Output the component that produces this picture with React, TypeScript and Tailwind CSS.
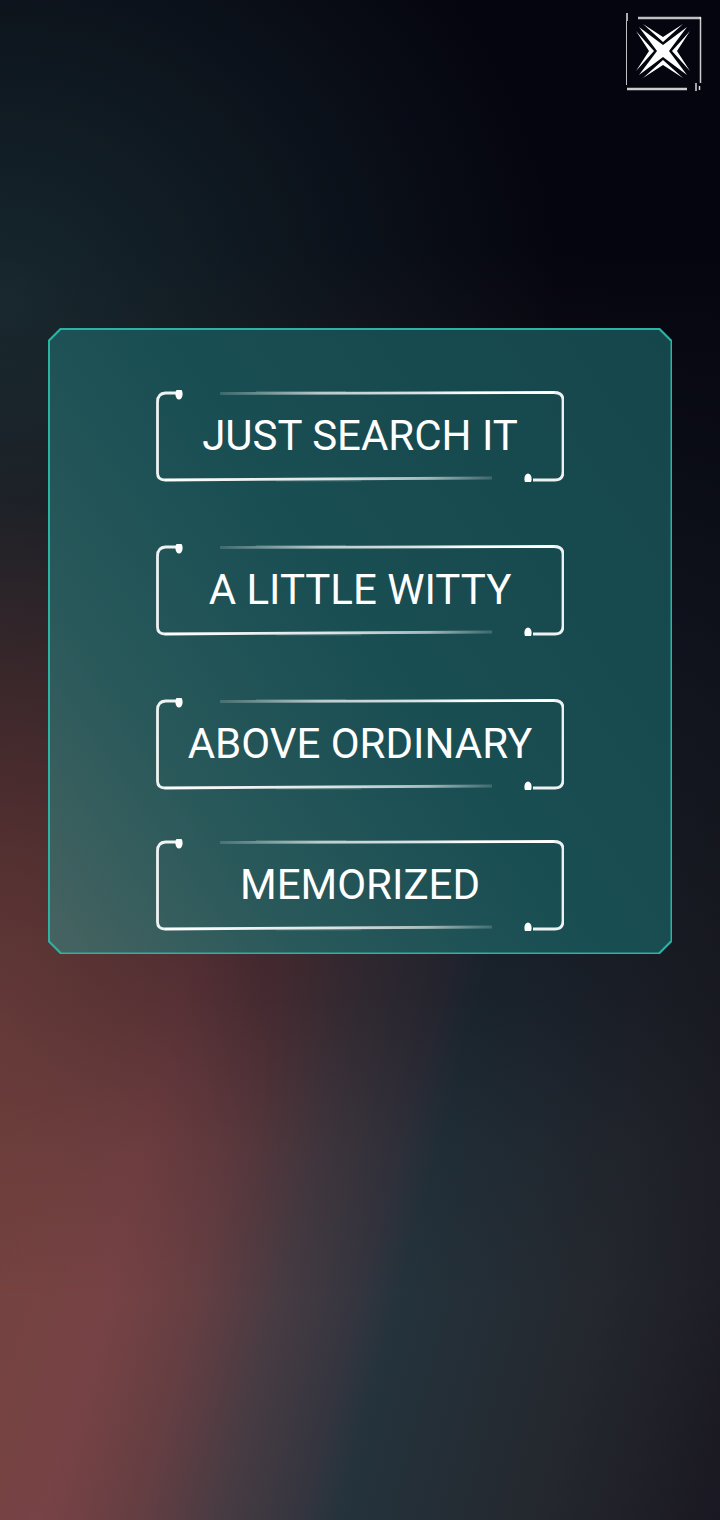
const font = { fontFamily: "Roboto, sans-serif" };

const OPTIONS = [
  { label: "JUST SEARCH IT", spacing: "mt-0" },
  { label: "A LITTLE WITTY", spacing: "mt-[62px]" },
  { label: "ABOVE ORDINARY", spacing: "mt-[62px]" },
  { label: "MEMORIZED", spacing: "mt-[49px]" },
];

// hand-inked outline with two broken corners
function ButtonFrame() {
  return (
    <svg viewBox="0 0 408 92" className="absolute inset-0 h-full w-full" fill="none">
      <defs>
        <linearGradient id="inkTop" x1="64" x2="400" y1="0" y2="0" gradientUnits="userSpaceOnUse">
          <stop offset="0" stopColor="#fff" stopOpacity="0.15" />
          <stop offset="0.3" stopColor="#fff" stopOpacity="0.7" />
          <stop offset="0.6" stopColor="#fff" stopOpacity="0.85" />
          <stop offset="0.75" stopColor="#fff" stopOpacity="1" />
        </linearGradient>
        <linearGradient id="inkBottom" x1="8" x2="338" y1="0" y2="0" gradientUnits="userSpaceOnUse">
          <stop offset="0" stopColor="#fff" stopOpacity="1" />
          <stop offset="0.5" stopColor="#fff" stopOpacity="0.85" />
          <stop offset="0.8" stopColor="#fff" stopOpacity="0.6" />
          <stop offset="1" stopColor="#fff" stopOpacity="0.15" />
        </linearGradient>
      </defs>
      <path d="M20 3H9.5Q1.5 3.5 1.5 12V83Q1.5 90 9 90" stroke="#fff" strokeOpacity="0.92" strokeWidth="2.8" />
      <path d="M64 3.5C170 3.5 300 2.5 398 2.5" stroke="url(#inkTop)" strokeWidth="2.8" />
      <path d="M100 1.5H190" stroke="#fff" strokeOpacity="0.14" strokeWidth="1" />
      <path d="M398 2.5Q407 2.5 407 10V82Q407 90 399 90H377" stroke="#fff" strokeOpacity="0.92" strokeWidth="2.8" />
      <path d="M9 90C130 89.5 240 88 336 88" stroke="url(#inkBottom)" strokeWidth="2.8" />
      <path d="M120 91H205" stroke="#fff" strokeOpacity="0.15" strokeWidth="1" />
      <ellipse cx="23" cy="4" rx="3.6" ry="5.5" fill="#fff" />
      <ellipse cx="372" cy="89" rx="3.6" ry="5.5" fill="#fff" />
    </svg>
  );
}

function LogoMark() {
  return (
    <svg viewBox="0 0 78 78" className="h-[78px] w-[78px]" fill="none">
      <path d="M2 0V8" stroke="#fff" strokeOpacity="0.9" strokeWidth="1.5" />
      <path d="M1.5 8V72" stroke="#fff" strokeOpacity="0.75" strokeWidth="1" />
      <path d="M13 5H76" stroke="#fff" strokeOpacity="0.75" strokeWidth="2.5" />
      <path d="M75.5 4V70" stroke="#fff" strokeOpacity="0.8" strokeWidth="1.5" />
      <path d="M2 76H62" stroke="#fff" strokeOpacity="0.8" strokeWidth="2.5" />
      <path d="M71 70V78M74.5 73V77" stroke="#fff" strokeOpacity="0.85" strokeWidth="1.5" />
      <g fill="#fff">
        {/* centre cross with four sharp arms */}
        <path d="M14 14L38 32L62 14L44 38L62 62L38 44L14 62L32 38Z" />
        {/* chevrons nested between the arms */}
        <path d="M18 11L38 24L58 11L38 29Z" />
        <path d="M18 65L38 52L58 65L38 47Z" />
        <path d="M11 18L24 38L11 58L29 38Z" />
        <path d="M65 18L52 38L65 58L47 38Z" />
      </g>
    </svg>
  );
}

export default function App() {
  return (
    <div
      style={font}
      className="relative h-[1520px] w-[720px] overflow-hidden bg-[radial-gradient(ellipse_260px_520px_at_0px_1020px,rgba(116,66,63,0.55)_0%,rgba(116,66,63,0)_100%),radial-gradient(ellipse_560px_520px_at_0px_300px,rgba(32,58,62,0.65)_0%,rgba(32,58,62,0)_100%),linear-gradient(to_bottom,rgba(5,5,15,1)_250px,rgba(5,5,15,0.8)_500px,rgba(5,5,15,0.6)_700px,rgba(5,5,15,0.35)_1000px,rgba(5,5,15,0.12)_1150px,rgba(5,5,15,0)_1300px),linear-gradient(105deg,#74423f_300px,#784246_433px,#633e42_530px,#463b42_610px,#35353f_680px,#24333c_722px,#24272e_920px,#1a1822_1089px)]"
    >
      <div className="flex justify-end pr-[17px] pt-[13px]">
        <LogoMark />
      </div>

      {/* question card, border is the outer clipped layer */}
      <div className="mx-[48px] mt-[237px] h-[626px] bg-[#2bb3a3] p-[1.5px] [clip-path:polygon(12px_0,calc(100%-12px)_0,100%_12px,100%_calc(100%-12px),calc(100%-12px)_100%,12px_100%,0_calc(100%-12px),0_12px)]">
        <div className="h-full w-full bg-[linear-gradient(55deg,#476361_0%,#28585a_25%,#194e53_50%,#15464b_100%)] px-[106.5px] pt-[60.5px] [clip-path:polygon(12px_0,calc(100%-12px)_0,100%_12px,100%_calc(100%-12px),calc(100%-12px)_100%,12px_100%,0_calc(100%-12px),0_12px)]">
          {OPTIONS.map((o) => (
            <button
              key={o.label}
              className={`relative flex h-[92px] w-[408px] items-center justify-center text-[42px] font-normal leading-none text-white ${o.spacing}`}
            >
              <ButtonFrame />
              {o.label}
            </button>
          ))}
        </div>
      </div>
    </div>
  );
}
